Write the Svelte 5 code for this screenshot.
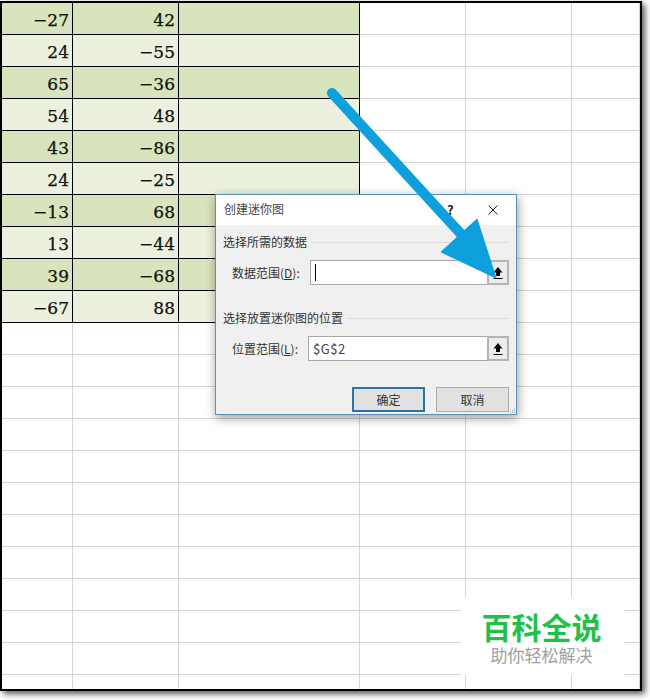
<script lang="ts">
  // first ten rows are the filled table, the rest of the sheet stays empty
  const values = [
    ["−27", "42"],
    ["24", "−55"],
    ["65", "−36"],
    ["54", "48"],
    ["43", "−86"],
    ["24", "−25"],
    ["−13", "68"],
    ["13", "−44"],
    ["39", "−68"],
    ["−67", "88"],
  ];
  const blankRows = Array.from({ length: 12 });
  const blankCols = Array.from({ length: 6 });
</script>

<div class="page">
  <div class="sheet">
    <div class="grid">
      {#each values as row, i}
        <div class="cell data num" class:alt={i % 2 === 1}>{row[0]}</div>
        <div class="cell data num" class:alt={i % 2 === 1}>{row[1]}</div>
        <div class="cell data" class:alt={i % 2 === 1}></div>
        <div class="cell"></div>
        <div class="cell"></div>
        <div class="cell"></div>
      {/each}
      {#each blankRows as _}
        {#each blankCols as __}
          <div class="cell"></div>
        {/each}
      {/each}
    </div>

    <div class="dialog">
      <div class="titlebar">
        <span class="title">创建迷你图</span>
        <span class="help">?</span>
        <svg class="close" width="10" height="10" viewBox="0 0 10 10">
          <path d="M0.5 0.5 L9.5 9.5 M9.5 0.5 L0.5 9.5" stroke="#222" stroke-width="1" fill="none" />
        </svg>
      </div>
      <div class="body">
        <div class="group"><span>选择所需的数据</span><i></i></div>
        <div class="field">
          <label for="data-range">数据范围(<u>D</u>):</label>
          <div class="input"><span class="caret"></span></div>
          <button id="data-range" class="pick" aria-label="选择数据范围">
            <svg width="12" height="14" viewBox="0 0 12 14">
              <path d="M6 1 L10.5 6.5 H8 V10 H4 V6.5 H1.5 Z M1.5 12 H10.5 V13 H1.5 Z" fill="#000" />
            </svg>
          </button>
        </div>
        <div class="group second"><span>选择放置迷你图的位置</span><i></i></div>
        <div class="field">
          <label for="place-range">位置范围(<u>L</u>):</label>
          <div class="input">$G$2</div>
          <button id="place-range" class="pick" aria-label="选择位置范围">
            <svg width="12" height="14" viewBox="0 0 12 14">
              <path d="M6 1 L10.5 6.5 H8 V10 H4 V6.5 H1.5 Z M1.5 12 H10.5 V13 H1.5 Z" fill="#000" />
            </svg>
          </button>
        </div>
        <div class="actions">
          <button class="btn primary">确定</button>
          <button class="btn">取消</button>
        </div>
      </div>
      <svg class="grip" width="6" height="6" viewBox="0 0 6 6">
        <path d="M4 0 h1 v1 h-1 Z M2 2 h1 v1 h-1 Z M4 2 h1 v1 h-1 Z M0 4 h1 v1 h-1 Z M2 4 h1 v1 h-1 Z M4 4 h1 v1 h-1 Z" fill="#b5b5b5" />
      </svg>
    </div>

    <svg class="arrow" width="640" height="300" viewBox="0 0 640 300">
      <path d="M332 93 L461 234" stroke="#0e9fdd" stroke-width="10" stroke-linecap="round" fill="none" />
      <path d="M477 219 L496 278 L441 252 Z" fill="#0e9fdd" stroke="#0e9fdd" stroke-width="1" stroke-linejoin="round" />
    </svg>

    <div class="mark">
      <div class="mark-main">百科全说</div>
      <div class="mark-sub">助你轻松解决</div>
    </div>
  </div>
</div>

<style>
  :global(body) {
    background: #fff;
  }

  .page {
    height: 700px;
    padding-top: 1px;
    box-sizing: border-box;
    overflow: hidden;
  }

  .sheet {
    position: relative;
    box-sizing: border-box;
    width: 642px;
    height: 690px;
    border: 2px solid #000;
    background: #fff;
    box-shadow: 3px 3px 6px rgba(0, 0, 0, 0.65);
    font-family: "Noto Sans CJK SC", "Liberation Sans", sans-serif;
  }

  .grid {
    display: grid;
    grid-template-columns: 71px 106px 181px 106px 106px 1fr;
    grid-auto-rows: 32px;
    height: 100%;
    overflow: hidden;
  }

  .cell {
    box-sizing: border-box;
    border-right: 1px solid #d4d4d4;
    border-bottom: 1px solid #d4d4d4;
  }

  .data {
    background: #d8e4bc;
    border-right-color: #000;
    border-bottom-color: #000;
  }

  .data.alt {
    background: #ebf1de;
  }

  .num {
    padding-right: 3px;
    text-align: right;
    font-family: "DejaVu Serif", "Liberation Serif", serif;
    font-size: 17px;
    line-height: 35px;
    color: #111;
    -webkit-text-stroke: 0.25px #111;
  }

  .dialog {
    position: absolute;
    left: 213px;
    top: 191px;
    box-sizing: border-box;
    width: 302px;
    height: 221px;
    border: 1px solid #5b93b5;
    background: #f0f0f0;
    box-shadow: 1px 3px 10px rgba(0, 0, 0, 0.4);
    font-size: 12px;
    color: #333;
  }

  .titlebar {
    position: relative;
    display: flex;
    align-items: center;
    box-sizing: border-box;
    height: 30px;
    padding: 0 0 3px 8px;
    background: #fff;
  }

  .title {
    color: #444;
  }

  .help {
    position: absolute;
    left: 231px;
    top: 5px;
    font-size: 13px;
    font-weight: 700;
    color: #222;
  }

  .close {
    position: absolute;
    left: 272px;
    top: 10px;
  }

  .body {
    padding: 8px 7px 0 7px;
  }

  .group {
    display: flex;
    align-items: center;
    gap: 4px;
    line-height: 18px;
    height: 18px;
  }

  .group span {
    white-space: nowrap;
  }

  .group i {
    flex: 1;
    height: 1px;
    background: #dcdcdc;
  }

  .group.second {
    margin-top: 24px;
  }

  .field {
    display: flex;
    align-items: stretch;
    height: 25px;
    margin-top: 9px;
    padding-left: 9px;
  }

  .field label {
    align-self: center;
    margin-right: 10px;
    white-space: nowrap;
  }

  .input {
    flex: 1;
    display: flex;
    align-items: center;
    box-sizing: border-box;
    padding-left: 4px;
    border: 1px solid #a8a8a8;
    border-right: none;
    background: #fff;
    font-size: 13px;
    letter-spacing: 0.5px;
    color: #444;
  }

  .caret {
    width: 1px;
    height: 17px;
    background: #000;
  }

  .pick {
    display: flex;
    align-items: center;
    justify-content: center;
    box-sizing: border-box;
    width: 22px;
    padding: 0;
    border: 2px solid #b4b4b4;
    background: #ececec;
  }

  .actions {
    display: flex;
    justify-content: flex-end;
    gap: 11px;
    margin-top: 26px;
  }

  .btn {
    box-sizing: border-box;
    width: 73px;
    height: 25px;
    padding: 0;
    border: 1px solid #adadad;
    background: #e1e1e1;
    font: inherit;
    color: #333;
  }

  .btn.primary {
    border: 2px solid #2a74a8;
  }

  .grip {
    position: absolute;
    right: 0;
    bottom: 0;
  }

  .arrow {
    position: absolute;
    left: -2px;
    top: -3px;
    pointer-events: none;
  }

  .mark {
    position: absolute;
    left: 459px;
    top: 594px;
    box-sizing: border-box;
    width: 163px;
    height: 78px;
    padding: 11px 2px 0 0;
    background: #fff;
    text-align: center;
  }

  .mark-main {
    font-size: 30px;
    line-height: 36px;
    font-weight: 700;
    color: #1fc14a;
  }

  .mark-sub {
    font-size: 17px;
    line-height: 22px;
    color: #a0a0a0;
  }
</style>
